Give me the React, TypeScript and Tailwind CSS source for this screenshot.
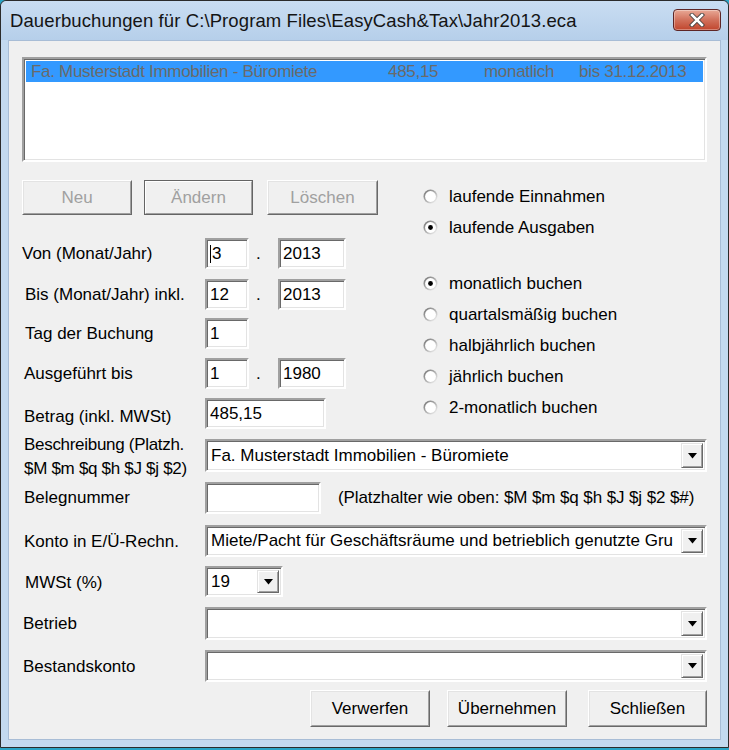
import React from "react";

const font = { fontFamily: '"Liberation Sans", Arial, sans-serif' };

function Sunken({ className = "", children }: { className?: string; children?: React.ReactNode }) {
  return (
    <div
      className={
        "bg-white border-2 border-t-[#a0a0a0] border-l-[#a0a0a0] border-r-white border-b-white shadow-[inset_1px_1px_0_#696969,inset_-1px_-1px_0_#e3e3e3] flex items-center text-[17px] text-black pl-[3px] overflow-hidden whitespace-nowrap " +
        className
      }
    >
      {children}
    </div>
  );
}

function Arrow() {
  return (
    <div className="w-[22px] h-full shrink-0 bg-[#f0f0f0] border border-t-[#e3e3e3] border-l-[#e3e3e3] border-r-[#696969] border-b-[#696969] shadow-[inset_1px_1px_0_#ffffff,inset_-1px_-1px_0_#a0a0a0] flex items-center justify-center">
      <svg width="9" height="6" viewBox="0 0 9 6">
        <polygon points="0,0 9,0 4.5,5.5" fill="#000" />
      </svg>
    </div>
  );
}

function Combo({ className = "", value = "" }: { className?: string; value?: string }) {
  return (
    <div
      className={
        "bg-white border-2 border-t-[#a0a0a0] border-l-[#a0a0a0] border-r-white border-b-white shadow-[inset_1px_1px_0_#696969,inset_-1px_-1px_0_#e3e3e3] flex items-stretch text-[17px] text-black pl-[4px] pr-[2px] py-[2px] " +
        className
      }
    >
      <div className="flex-1 flex items-center overflow-hidden whitespace-nowrap">{value}</div>
      <Arrow />
    </div>
  );
}

function Btn({
  children,
  className = "",
  disabled = false,
  def = false,
}: {
  children: React.ReactNode;
  className?: string;
  disabled?: boolean;
  def?: boolean;
}) {
  return (
    <div
      className={
        "bg-[#f0f0f0] flex items-center justify-center text-[17px] " +
        (def ? "border border-[#646464] " : "border border-t-[#ffffff] border-l-[#ffffff] border-r-[#696969] border-b-[#696969] ") +
        (disabled ? "text-[#a0a0a0] " : "text-black ") +
        className
      }
    >
      <div
        className={
          "w-full h-full flex items-center justify-center " +
          (def
            ? "border border-t-white border-l-white border-r-[#a0a0a0] border-b-[#a0a0a0]"
            : "border border-t-[#e3e3e3] border-l-[#e3e3e3] border-r-[#a0a0a0] border-b-[#a0a0a0]")
        }
      >
        {children}
      </div>
    </div>
  );
}

function Radio({ checked, label }: { checked?: boolean; label: string }) {
  return (
    <div className="flex items-center h-[31px]">
      <svg width="15" height="15" viewBox="0 0 15 15" className="ml-[0px] mr-[11px]">
        <defs>
          <linearGradient id="rg" x1="0" y1="0" x2="1" y2="1">
            <stop offset="0" stopColor="#6e6e6e" />
            <stop offset="0.5" stopColor="#b0b0b0" />
            <stop offset="1" stopColor="#ffffff" />
          </linearGradient>
        </defs>
        <circle cx="7.5" cy="7.5" r="7" fill="url(#rg)" />
        <circle cx="7.5" cy="7.5" r="5.4" fill="#ffffff" />
        {checked && <circle cx="7.5" cy="7.5" r="2.4" fill="#000" />}
      </svg>
      <span className="text-[17px] text-black">{label}</span>
    </div>
  );
}

export default function App() {
  return (
    <div style={font} className="w-[729px] h-[750px] bg-[#2aa4c6] overflow-hidden">
      <div className="w-[729px] h-[748px] bg-[#c3d9ef] border border-[#2b2b2b] rounded-t-[6px] flex flex-col">
        {/* Title bar */}
        <div className="h-[39px] shrink-0 flex items-center pl-[9px] pr-[7px] bg-gradient-to-b from-[#c9ddf2] to-[#b6cfea] rounded-t-[6px]">
          <div className="flex-1 text-[18.5px] text-[#141414] pt-[1px] tracking-[0.1px]">
            Dauerbuchungen für C:\Program Files\EasyCash&amp;Tax\Jahr2013.eca
          </div>
          <div className="w-[48px] h-[22px] mt-[-2px] rounded-[4px] border border-[#5e2626] bg-gradient-to-b from-[#e8a896] via-[#d1705b] to-[#c0442c] flex items-center justify-center shadow-[inset_0_0_0_1px_rgba(255,255,255,0.35)]">
            <svg width="16" height="14" viewBox="0 0 16 14">
              <path d="M3 2 L13 12 M13 2 L3 12" stroke="#3a3a3a" strokeWidth="4.2" strokeLinecap="square" />
              <path d="M3 2 L13 12 M13 2 L3 12" stroke="#ffffff" strokeWidth="2.6" strokeLinecap="square" />
            </svg>
          </div>
        </div>
        {/* Client area */}
        <div className="flex-1 mx-[7px] mb-[7px] bg-[#f0f0f0] border border-[#a8bdd6] relative">
          <div className="pl-[13px] pr-[13px] pt-[16px]">
            {/* List */}
            <div className="h-[105px] bg-white border-2 border-t-[#a0a0a0] border-l-[#a0a0a0] border-r-white border-b-white shadow-[inset_1px_1px_0_#696969,inset_-1px_-1px_0_#e3e3e3] p-[2px]">
              <div className="h-[21px] bg-[#3399ff] text-[#6a6a6a] text-[17px] tracking-[-0.3px] flex items-center whitespace-nowrap relative">
                <span className="absolute left-[5px]">Fa. Musterstadt Immobilien - Büromiete</span>
                <span className="absolute left-[362px]">485,15</span>
                <span className="absolute left-[458px]">monatlich</span>
                <span className="absolute left-[553px]">bis 31.12.2013</span>
              </div>
            </div>

            {/* Middle section */}
            <div className="flex mt-[18px]">
              <div className="w-[400px]">
                <div className="flex h-[35px]">
                  <Btn disabled className="w-[110px]">Neu</Btn>
                  <Btn disabled def className="w-[109px] ml-[12px]">Ändern</Btn>
                  <Btn disabled className="w-[111px] ml-[14px]">Löschen</Btn>
                </div>

                <div className="flex items-center h-[31px] mt-[23px]">
                  <div className="w-[183px] text-[17px]">Von (Monat/Jahr)</div>
                  <Sunken className="w-[44px] h-[31px]">
                    <span className="w-[1px] h-[18px] bg-black mr-[1px]" />3
                  </Sunken>
                  <div className="w-[29px] text-[17px] pl-[7px]">.</div>
                  <Sunken className="w-[68px] h-[31px]">2013</Sunken>
                </div>
                <div className="flex items-center h-[31px] mt-[10px]">
                  <div className="w-[183px] text-[17px] pl-[3px]">Bis (Monat/Jahr) inkl.</div>
                  <Sunken className="w-[44px] h-[31px]">12</Sunken>
                  <div className="w-[29px] text-[17px] pl-[7px]">.</div>
                  <Sunken className="w-[68px] h-[31px]">2013</Sunken>
                </div>
                <div className="flex items-center h-[31px] mt-[8px]">
                  <div className="w-[183px] text-[17px] pl-[3px]">Tag der Buchung</div>
                  <Sunken className="w-[44px] h-[31px]">1</Sunken>
                </div>
                <div className="flex items-center h-[31px] mt-[9px]">
                  <div className="w-[183px] text-[17px] pl-[2px]">Ausgeführt bis</div>
                  <Sunken className="w-[44px] h-[31px]">1</Sunken>
                  <div className="w-[29px] text-[17px] pl-[7px]">.</div>
                  <Sunken className="w-[68px] h-[31px]">1980</Sunken>
                </div>
                <div className="flex items-center h-[31px] mt-[9px]">
                  <div className="w-[183px] text-[17px] pl-[2px] pt-[6px]">Betrag (inkl. MWSt)</div>
                  <Sunken className="w-[121px] h-[31px]">485,15</Sunken>
                </div>
              </div>

              <div className="flex-1 pl-[1px] pt-[1px]">
                <Radio label="laufende Einnahmen" />
                <Radio checked label="laufende Ausgaben" />
                <div className="h-[25px]" />
                <Radio checked label="monatlich buchen" />
                <Radio label="quartalsmäßig buchen" />
                <Radio label="halbjährlich buchen" />
                <Radio label="jährlich buchen" />
                <Radio label="2-monatlich buchen" />
              </div>
            </div>

            {/* Lower section */}
            <div className="flex items-start mt-[10px] h-[33px]">
              <div className="w-[183px] h-[33px] text-[17px] leading-[24px] pl-[2px] tracking-[-0.3px] whitespace-nowrap">
                <div className="relative -top-[6px]">
                  Beschreibung (Platzh.
                  <br />
                  $M $m $q $h $J $j $2)
                </div>
              </div>
              <Combo className="w-[502px] h-[33px]" value="Fa. Musterstadt Immobilien - Büromiete" />
            </div>
            <div className="flex items-center mt-[10px] h-[32px]">
              <div className="w-[183px] text-[17px] pl-[2px]">Belegnummer</div>
              <Sunken className="w-[116px] h-[32px]" />
              <div className="text-[17px] pl-[17px] tracking-[-0.1px]">(Platzhalter wie oben: $M $m $q $h $J $j $2 $#)</div>
            </div>
            <div className="flex items-center mt-[11px] h-[32px]">
              <div className="w-[183px] text-[17px] pl-[2px] pt-[2px]">Konto in E/Ü-Rechn.</div>
              <Combo
                className="w-[502px] h-[32px]"
                value="Miete/Pacht für Geschäftsräume und betrieblich genutzte Gru"
              />
            </div>
            <div className="flex items-center mt-[9px] h-[31px]">
              <div className="w-[183px] text-[17px] pl-[3px] pt-[2px]">MWSt (%)</div>
              <Combo className="w-[78px] h-[31px]" value="19" />
            </div>
            <div className="flex items-center mt-[10px] h-[33px]">
              <div className="w-[183px] text-[17px] pl-[1px] pt-[1px]">Betrieb</div>
              <Combo className="w-[502px] h-[33px]" />
            </div>
            <div className="flex items-center mt-[10px] h-[32px]">
              <div className="w-[183px] text-[17px] pl-[1px] pt-[1px]">Bestandskonto</div>
              <Combo className="w-[502px] h-[32px]" />
            </div>
            <div className="flex justify-end mt-[8px]">
              <Btn className="w-[120px] h-[37px]">Verwerfen</Btn>
              <Btn className="w-[120px] h-[37px] ml-[17px]">Übernehmen</Btn>
              <Btn className="w-[119px] h-[37px] ml-[21px]">Schließen</Btn>
            </div>
          </div>
        </div>
      </div>
    </div>
  );
}
